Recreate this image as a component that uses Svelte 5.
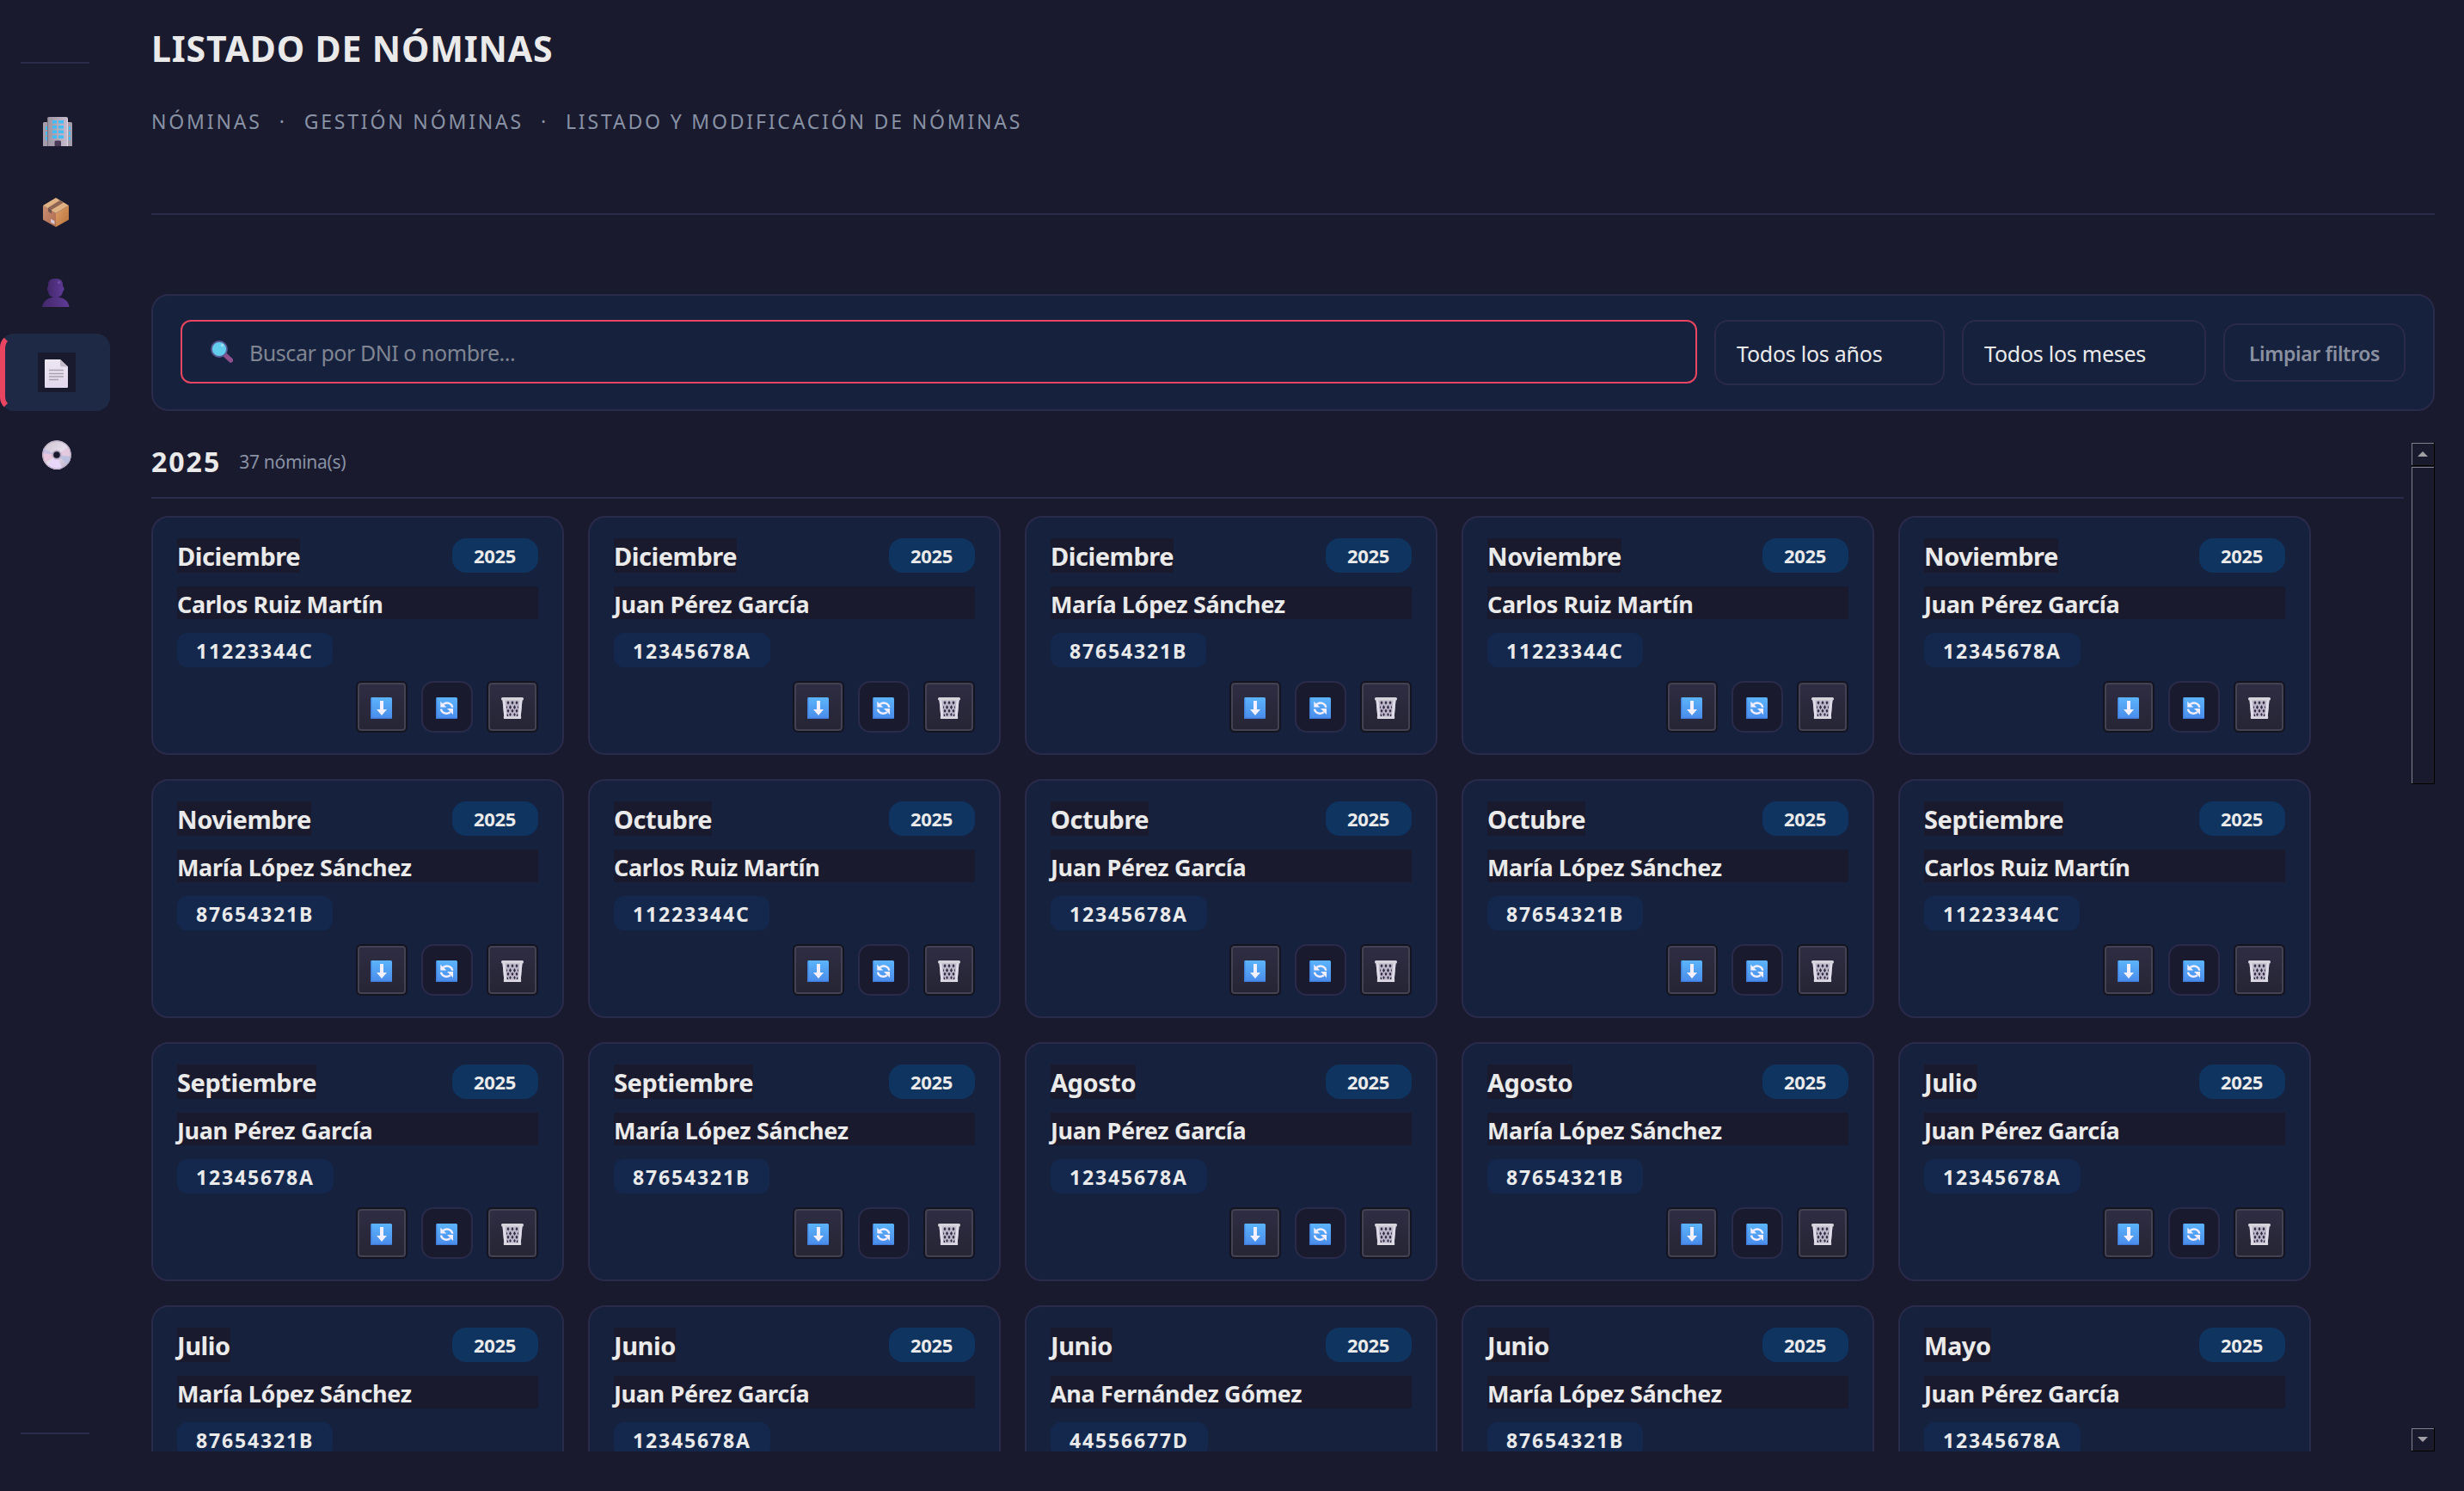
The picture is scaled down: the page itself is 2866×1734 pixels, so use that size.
<script lang="ts">
	// Sidebar entries, top to bottom
	const nav = ["building", "box", "person", "doc", "disc"];
	const active = "doc";

	const crumbs = ["NÓMINAS", "GESTIÓN NÓMINAS", "LISTADO Y MODIFICACIÓN DE NÓMINAS"];

	const carlos = { name: "Carlos Ruiz Martín", dni: "11223344C" };
	const juan = { name: "Juan Pérez García", dni: "12345678A" };
	const maria = { name: "María López Sánchez", dni: "87654321B" };
	const ana = { name: "Ana Fernández Gómez", dni: "44556677D" };

	const year = 2025;
	const total = 37;
	const payrolls = [
		{ month: "Diciembre", ...carlos },
		{ month: "Diciembre", ...juan },
		{ month: "Diciembre", ...maria },
		{ month: "Noviembre", ...carlos },
		{ month: "Noviembre", ...juan },
		{ month: "Noviembre", ...maria },
		{ month: "Octubre", ...carlos },
		{ month: "Octubre", ...juan },
		{ month: "Octubre", ...maria },
		{ month: "Septiembre", ...carlos },
		{ month: "Septiembre", ...juan },
		{ month: "Septiembre", ...maria },
		{ month: "Agosto", ...juan },
		{ month: "Agosto", ...maria },
		{ month: "Julio", ...juan },
		{ month: "Julio", ...maria },
		{ month: "Junio", ...juan },
		{ month: "Junio", ...ana },
		{ month: "Junio", ...maria },
		{ month: "Mayo", ...juan },
	];
</script>

<!-- Gradients shared by every icon on the page -->
<svg class="defs" width="0" height="0" aria-hidden="true">
	<defs>
		<linearGradient id="g-wall" x1="0" x2="1"><stop offset="0" stop-color="#9b94a2" /><stop offset="1" stop-color="#c8bdd0" /></linearGradient>
		<linearGradient id="g-left" x1="0" x2="1" y2="1"><stop offset="0" stop-color="#c98e72" /><stop offset="1" stop-color="#b06c50" /></linearGradient>
		<linearGradient id="g-right" x1="0" x2="1" y2="1"><stop offset="0" stop-color="#dda06e" /><stop offset="1" stop-color="#b97335" /></linearGradient>
		<linearGradient id="g-person" x1="0" x2="1"><stop offset="0" stop-color="#43286a" /><stop offset="1" stop-color="#5f3b97" /></linearGradient>
		<linearGradient id="g-disc" x1="0" y1="0" x2="1" y2="1"><stop offset="0" stop-color="#c9c2cf" /><stop offset=".5" stop-color="#e6dcea" /><stop offset="1" stop-color="#b9aac8" /></linearGradient>
		<linearGradient id="g-blue" x1="0" y1="0" x2="0" y2="1"><stop offset="0" stop-color="#5cb4fb" /><stop offset="1" stop-color="#4a8ceb" /></linearGradient>
		<linearGradient id="g-doc" x1="0" y1="0" x2="0" y2="1"><stop offset="0" stop-color="#ece6f1" /><stop offset="1" stop-color="#e2d8ee" /></linearGradient>
	</defs>
</svg>

{#snippet navIcon(name: string)}
	{#if name === "building"}
		<svg class="building" width="34" height="34" viewBox="0 0 34 34">
			<path d="M0 34V7.500Q0 6 1.500 6H6V34zM28 6h4.500Q34 6 34 7.500V34h-6z" fill="#a59dab" />
			<path d="M5 34V2Q5 0 7 0h20q2 0 2 2v32z" fill="url(#g-wall)" />
			<path d="M5.500 2.500V34" stroke="#77707e" stroke-width="1" />
			<path d="M28.500 2v32" stroke="#e0d7e6" stroke-width="1" />
			<g fill="#42bdf8">
				<path d="M11 4h5v3.500h-5zM18 4h6v3.500h-6zM11 10h5v3.500h-5zM18 10h6v3.500h-6zM11 15.500h5V19h-5zM18 15.500h6V19h-6zM11 21.500h5V25h-5zM18 21.500h6V25h-6z" />
				<path d="M3 11h2v4H3zM3 17h2v4H3zM3 23h2v4H3zM30 11h2v4h-2zM30 17h2v4h-2zM30 23h2v4h-2z" />
			</g>
			<path d="M13.500 34v-5q0-1.500 1.500-1.500h4.500q1.500 0 1.500 1.500v5z" fill="#4a3c58" />
		</svg>
	{:else if name === "box"}
		<svg width="30" height="34" viewBox="0 0 30 34">
			<path d="M0 9l15 9v16L0 25.500z" fill="url(#g-left)" />
			<path d="M30 9l-15 9v16l15-8.500z" fill="url(#g-right)" />
			<path d="M15 0l15 9-15 9L0 9z" fill="#dfb183" />
			<path d="M19.500 3l4.500 2.500-14 8.500-4-2.500z" fill="#8f6453" />
			<path d="M6 11.500l4 2.500v4.500l-4-2.400z" fill="#765452" />
			<path d="M9 24.500l4.500 2.500v4L9 28.500z" fill="#d7c5d5" />
		</svg>
	{:else if name === "person"}
		<svg class="person" width="32" height="34" viewBox="0 0 32 34">
			<path d="M7 7q0-7 8-7h1q8 0 8 7v2q1.500.5 1.500 3T24 15q-.5 7-8.500 7T7 15q-1-.5-1-3t1-3z" fill="url(#g-person)" />
			<path d="M0 33q2-11 16-11.500Q30 22 31.500 33z" fill="url(#g-person)" />
			<circle cx="19.500" cy="4.500" r="1.500" fill="#7550a8" />
		</svg>
	{:else if name === "doc"}
		<svg width="27" height="33" viewBox="0 0 27 33">
			<path d="M1 0H18l9 8.500V32q0 1-1 1H1q-1 0-1-1V1Q0 0 1 0z" fill="url(#g-doc)" />
			<path d="M18 0l9 8.500h-7.500Q18 8.500 18 7z" fill="#c3bbc9" />
			<path d="M5 12.500h17M5 16.500h17M5 20h17M5 23.500h11" stroke="#aaa1af" stroke-width="1.300" />
		</svg>
	{:else}
		<svg class="disc" width="34" height="34" viewBox="0 0 34 34">
			<circle cx="17" cy="17" r="16.800" fill="url(#g-disc)" />
			<path d="M17 17L1.500 9.500Q-1 17 3 26z" fill="#c6bfe4" />
			<path d="M17 17L.4 15Q0 21 3 26z" fill="#e8c5dc" />
			<path d="M17 17L31 8q4.500 8 1 16z" fill="#e3cadf" />
			<path d="M17 17l16.500 2q-.5 6-4 9z" fill="#bcc1df" />
			<path d="M17 17L6 29.500q10 8 17 3z" fill="#e8d7fb" />
			<circle cx="17" cy="17" r="16.200" fill="none" stroke="#b6abbf" stroke-width="1" />
			<circle cx="17" cy="17" r="5.500" fill="#b5a9bf" />
			<circle cx="17" cy="17" r="3.800" fill="#1a1a2e" />
		</svg>
	{/if}
{/snippet}

{#snippet downIcon()}
	<svg width="25" height="25" viewBox="0 0 25 25">
		<rect width="25" height="25" rx="1.500" fill="url(#g-blue)" />
		<path d="M.7 1v23.300h23" fill="none" stroke="#3f7ad6" stroke-width="1.200" />
		<path d="M11 4h4v10h4l-6 7-6-7h4z" fill="#f5f0ff" />
	</svg>
{/snippet}

{#snippet syncIcon()}
	<svg width="25" height="25" viewBox="0 0 25 25">
		<rect width="25" height="25" rx="1.500" fill="url(#g-blue)" />
		<path d="M.7 1v23.300h23" fill="none" stroke="#3f7ad6" stroke-width="1.200" />
		<g fill="none" stroke="#f5f0ff" stroke-width="2.400">
			<path d="M8.500 8q3.500-2.500 7-1 3.500 1.500 3.700 4.700" />
			<path d="M16.800 17.300q-3.600 2.500-7.200.9-3.200-1.500-3.600-4.600" />
		</g>
		<path d="M5.300 4.800v6.700h7zM20 20v-7h-7z" fill="#f5f0ff" />
	</svg>
{/snippet}

{#snippet trashIcon()}
	<svg class="trash" width="26" height="25" viewBox="0 0 26 25">
		<path d="M1.500 3h23l-2 22h-19z" fill="#bdb6c8" />
		<path d="M1.500 3L3.500 25h3L4.500 3zM24.500 3l-2 22h-3l2-22z" fill="#e0dce8" />
		<g fill="#2d2b43">
			<path d="M8 4l1.500 2.200L8 8.400 6.500 6.200zM13 4l1.500 2.200L13 8.400l-1.500-2.200zM18 4l1.500 2.200L18 8.400l-1.500-2.200z" />
			<path d="M10.500 9l1.500 2.500-1.500 2.500L9 11.500zM15.500 9l1.500 2.500-1.500 2.500-1.500-2.500zM6 9.500L7.200 11.500 6.200 13.500zM20 9.500l-1.200 2 1 2z" />
			<path d="M8 13.500l1.500 2.200L8 18l-1.500-2.300zM13 13.500l1.500 2.200L13 18l-1.500-2.300zM18 13.500l1.500 2.200L18 18l-1.500-2.300z" />
			<path d="M10.500 18l1.300 2-1.300 2-1.300-2zM15.500 18l1.300 2-1.300 2-1.300-2zM6.500 19.500h1.200l.6 2.500H6.800zM18.300 19.500h1.200l-.3 2.500h-1.500z" />
		</g>
		<path d="M2.700 22.500h20.600l-.3 2.500H3z" fill="#dcd8e2" />
		<rect width="26" height="3.600" rx="1.500" fill="#d6d3da" />
	</svg>
{/snippet}

<div class="app">
	<nav class="sidebar">
		<hr />
		<div class="links">
			{#each nav as item}
				<button class="link" class:active={item === active} aria-label={item}>
					<span class="glyph">{@render navIcon(item)}</span>
				</button>
			{/each}
		</div>
		<hr class="bottom" />
	</nav>

	<main>
		<header>
			<h1>LISTADO DE NÓMINAS</h1>
			<div class="crumbs">
				{#each crumbs as crumb, i}
					{#if i > 0}<span class="dot">·</span>{/if}
					<span class="crumb">{crumb}</span>
				{/each}
			</div>
		</header>

		<section class="filters">
			<div class="search">
				<svg width="26" height="26" viewBox="0 0 26 26">
					<path d="M17 17l6.500 6" stroke="#8e4f8c" stroke-width="5.500" stroke-linecap="round" />
					<circle cx="10" cy="10" r="9" fill="#62cdec" stroke="#5a5a96" stroke-width="1.800" />
					<circle cx="13.500" cy="5.500" r="1.600" fill="#a5e6f8" />
				</svg>
				<span>Buscar por DNI o nombre...</span>
			</div>
			<div class="select years">Todos los años</div>
			<div class="select months">Todos los meses</div>
			<button class="clear">Limpiar filtros</button>
		</section>

		<div class="scroller">
			<section class="list">
				<div class="year-head">
					<h2>{year}</h2>
					<span>{total} nómina(s)</span>
				</div>
				<div class="cards">
					{#each payrolls as p}
						<article class="card">
							<div class="top">
								<span class="month">{p.month}</span>
								<span class="badge">{year}</span>
							</div>
							<div class="name">{p.name}</div>
							<div class="dni">{p.dni}</div>
							<div class="actions">
								<button class="raised" aria-label="Descargar">{@render downIcon()}</button>
								<button class="flat" aria-label="Reemplazar">{@render syncIcon()}</button>
								<button class="raised" aria-label="Eliminar">{@render trashIcon()}</button>
							</div>
						</article>
					{/each}
				</div>
			</section>

			<div class="scrollbar">
				<div class="bevel step"><svg width="12" height="6" viewBox="0 0 12 6"><path d="M6 0l6 6H0z" fill="#a0a0a4" /></svg></div>
				<div class="bevel thumb"></div>
				<div class="bevel step end"><svg width="12" height="6" viewBox="0 0 12 6"><path d="M0 0h12L6 6z" fill="#a0a0a4" /></svg></div>
			</div>
		</div>
	</main>
</div>

<style>
	:global(body) {
		margin: 0;
		background: #1a1a2e;
	}

	.defs {
		position: absolute;
	}

	.app {
		display: flex;
		width: 2866px;
		height: 1734px;
		overflow: hidden;
		box-sizing: border-box;
		background: #1a1a2e;
		color: #eaeaea;
		font-family: "Noto Sans", "Open Sans", sans-serif;
		white-space: nowrap;
	}

	.app * {
		box-sizing: border-box;
	}

	svg {
		display: block;
		flex: none;
	}

	button {
		margin: 0;
		padding: 0;
		border: 0;
		background: none;
		font: inherit;
		color: inherit;
	}

	/* Sidebar */
	.sidebar {
		display: flex;
		flex-direction: column;
		width: 128px;
		padding: 72px 0 66px;
	}

	hr {
		width: 80px;
		height: 2px;
		margin: 0 24px;
		border: 0;
		background: #2a2a4a;
	}

	hr.bottom {
		margin-top: auto;
	}

	.links {
		display: flex;
		flex-direction: column;
		gap: 4px;
		margin-top: 32px;
	}

	.link {
		position: relative;
		display: flex;
		align-items: center;
		height: 90px;
		padding-left: 44px;
		border-radius: 16px;
	}

	.link.active {
		background: #1e2a45;
	}

	/* Red marker that follows the rounded left edge */
	.link.active::before {
		content: "";
		position: absolute;
		inset: 0;
		border: 6px solid transparent;
		border-left-color: #e94560;
		border-radius: 16px;
	}

	.glyph {
		display: flex;
		align-items: center;
		justify-content: center;
		width: 44px;
		height: 46px;
		padding: 4px 2px 0 0;
	}

	.active .glyph {
		padding: 3px 1px 0 0;
		background: #1a1a2e;
	}

	.building {
		margin-left: 4px;
	}

	.disc {
		margin-left: 2px;
	}

	/* Content */
	main {
		display: flex;
		flex-direction: column;
		width: 2656px;
		margin-left: 48px;
	}

	header {
		height: 250px;
		padding-top: 27px;
		border-bottom: 2px solid #2a2a4a;
	}

	h1 {
		margin: 0;
		font-size: 41px;
		font-weight: 700;
		line-height: 58px;
		letter-spacing: 0.850px;
	}

	.crumbs {
		display: flex;
		margin-top: 40px;
		font-size: 23px;
		line-height: 32px;
		letter-spacing: 2.820px;
		color: #8892a4;
	}

	.dot {
		margin: 0 20px;
	}

	.filters {
		display: flex;
		gap: 20px;
		height: 136px;
		margin-top: 92px;
		padding: 28px 32px;
		border: 2px solid #2a2a4a;
		border-radius: 20px;
		background: #16213e;
		font-size: 25px;
	}

	.search {
		display: flex;
		flex: 1;
		align-items: center;
		gap: 19px;
		height: 74px;
		padding-left: 33px;
		border: 2px solid #e94560;
		border-radius: 12px;
		letter-spacing: -0.450px;
		color: #808592;
	}

	.search span {
		padding-top: 2px;
	}

	.select {
		display: flex;
		align-items: center;
		height: 76px;
		padding: 2px 0 0 24px;
		border: 2px solid #2a2a4a;
		border-radius: 16px;
		letter-spacing: -0.250px;
	}

	.years {
		width: 268px;
	}

	.months {
		width: 284px;
	}

	.clear {
		width: 212px;
		height: 68px;
		margin-top: 4px;
		padding-top: 1px;
		border: 2px solid #2a2a4a;
		border-radius: 16px;
		font-size: 23px;
		font-weight: 600;
		letter-spacing: -0.350px;
		color: #8a90a0;
	}

	.scroller {
		display: flex;
		justify-content: space-between;
		height: 1174px;
		margin-top: 36px;
		overflow: hidden;
	}

	.list {
		width: 2620px;
	}

	.year-head {
		display: flex;
		gap: 21px;
		height: 66px;
		border-bottom: 2px solid #2a2a4a;
		line-height: 46px;
	}

	h2 {
		margin: 0;
		font-size: 32px;
		font-weight: 700;
		letter-spacing: 2px;
	}

	.year-head span {
		font-size: 21px;
		letter-spacing: -0.300px;
		color: #8892a4;
	}

	.cards {
		display: grid;
		grid-template-columns: repeat(5, 480px);
		gap: 28px;
		margin-top: 20px;
	}

	.card {
		display: flex;
		flex-direction: column;
		gap: 16px;
		height: 278px;
		padding: 24px 28px;
		border: 2px solid #2a2a4a;
		border-radius: 20px;
		background: #16213e;
		font-weight: 700;
	}

	.top {
		display: flex;
		justify-content: space-between;
	}

	.month {
		height: 40px;
		background: #1a1a2e;
		font-size: 29px;
		line-height: 42px;
		letter-spacing: -0.450px;
	}

	.badge {
		width: 100px;
		height: 40px;
		padding-right: 1px;
		border-radius: 16px;
		background: #0f3460;
		font-size: 22px;
		line-height: 41px;
		letter-spacing: -0.300px;
		text-align: center;
	}

	.name {
		height: 38px;
		background: #1a1a2e;
		font-size: 27px;
		line-height: 41px;
		letter-spacing: -0.350px;
	}

	.dni {
		align-self: flex-start;
		height: 40px;
		padding: 0 22px;
		border-radius: 12px;
		background: #14284e;
		font-size: 23px;
		line-height: 42px;
		letter-spacing: 1.850px;
	}

	.actions {
		display: flex;
		justify-content: flex-end;
		gap: 16px;
	}

	.actions button {
		display: flex;
		align-items: center;
		justify-content: center;
		width: 60px;
		height: 60px;
		padding: 3px 1px 0 0;
	}

	.trash {
		margin-left: 1px;
	}

	.raised {
		border: 2px solid #141421;
		border-radius: 6px;
		background: linear-gradient(#2e2d43, #262534);
		box-shadow: inset 0 0 0 2px #434252;
	}

	.flat {
		border: 2px solid #2a2a4a;
		border-radius: 14px;
		background: #1a1a2e;
	}

	/* Classic bevelled scrollbar */
	.scrollbar {
		display: flex;
		flex-direction: column;
		width: 28px;
	}

	.bevel {
		border: 1px solid #1a1a2e;
		border-right-color: #000;
		border-bottom-color: #000;
		box-shadow: inset 1px 1px #808088, inset -1px -1px #1d1d22;
	}

	.step {
		display: flex;
		align-items: center;
		justify-content: center;
		height: 28px;
	}

	.thumb {
		height: 370px;
	}

	.end {
		margin-top: auto;
	}
</style>
